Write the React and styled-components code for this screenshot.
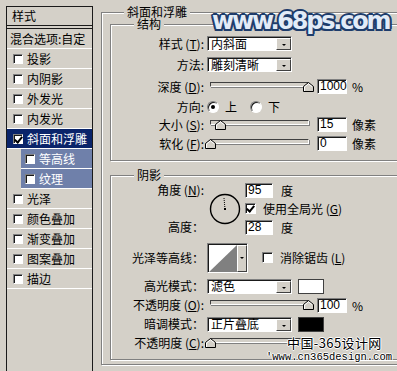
import React from "react";
import styled, { createGlobalStyle } from "styled-components";

const GlobalStyle = createGlobalStyle`
  html, body {
    margin: 0;
    padding: 0;
    background: #d4d0c8;
  }
  body {
    font-family: "Noto Sans CJK SC", "Liberation Sans", sans-serif;
    font-size: 12px;
    color: #000;
  }
  #root {
    width: 397px;
    height: 371px;
    overflow: hidden;
  }
`;

const effects = [
  { name: "投影" },
  { name: "内阴影" },
  { name: "外发光" },
  { name: "内发光" },
  { name: "斜面和浮雕", checked: true, active: true },
  { name: "等高线", sub: true },
  { name: "纹理", sub: true },
  { name: "光泽" },
  { name: "颜色叠加" },
  { name: "渐变叠加" },
  { name: "图案叠加" },
  { name: "描边" },
];

function App() {
  return (
    <>
      <GlobalStyle />
      <Page>
        <StyleList>
          <ListHeader>样式</ListHeader>
          <ListBody>
            <BlendRow>混合选项:自定</BlendRow>
            {effects.map((e) => (
              <EffectRow key={e.name} $active={e.active} $sub={e.sub}>
                <Check $checked={e.checked} />
                <EffectName>{e.name}</EffectName>
              </EffectRow>
            ))}
          </ListBody>
        </StyleList>

        <Options>
          <Group $pt={11} $pb={4} $pl={8}>
            <GroupTitle $left={22}>斜面和浮雕</GroupTitle>

            <Group $pt={8} $pb={7}>
              <GroupTitle $left={23}>结构</GroupTitle>
              <Row $h={21}>
                <Label>样式 (<u>T</u>):</Label>
                <Select value="内斜面" />
              </Row>
              <Row $h={21}>
                <Label>方法:</Label>
                <Select value="雕刻清晰" />
              </Row>
              <Row $h={23}>
                <Label>深度 (<u>D</u>):</Label>
                <Slider value={1} />
                <NumBox>1000</NumBox>
                <Unit>%</Unit>
              </Row>
              <Row $h={17}>
                <Label>方向:</Label>
                <Radio $on />
                <RadioText>上</RadioText>
                <Radio />
                <RadioText>下</RadioText>
              </Row>
              <Row $h={19}>
                <Label>大小 (<u>S</u>):</Label>
                <Slider value={0.11} />
                <NumBox>15</NumBox>
                <Unit>像素</Unit>
              </Row>
              <Row $h={19}>
                <Label>软化 (<u>F</u>):</Label>
                <Slider value={0} />
                <NumBox>0</NumBox>
                <Unit>像素</Unit>
              </Row>
            </Group>

            <Group $pt={5} $pb={6} $mt={14}>
              <GroupTitle $left={23}>阴影</GroupTitle>
              <AngleGrid>
                <Label>角度 (<u>N</u>):</Label>
                <Dial>
                  <svg width="32" height="32" viewBox="0 0 32 32">
                    <circle cx="16" cy="16" r="14.5" fill="none" stroke="#000" strokeWidth="1.4" />
                    <line x1="16" y1="16" x2="15" y2="5" stroke="#000" strokeWidth="1" strokeDasharray="1 1" />
                    <rect x="15" y="15" width="2" height="2" fill="#000" />
                  </svg>
                </Dial>
                <Inline>
                  <NumBox $w={28} $ml={0}>95</NumBox>
                  <Unit $ml={8}>度</Unit>
                </Inline>
                <Inline $row={2}>
                  <Check $checked $size={11} />
                  <CheckText>使用全局光 (<u>G</u>)</CheckText>
                </Inline>
                <Label $row={3}>高度：</Label>
                <Inline $row={3}>
                  <NumBox $w={28} $ml={0}>28</NumBox>
                  <Unit $ml={8}>度</Unit>
                </Inline>
              </AngleGrid>

              <Row $h={33} $mt={5}>
                <Label>光泽等高线：</Label>
                <ContourPicker>
                  <svg width="28" height="27" viewBox="0 0 28 27">
                    <rect width="28" height="27" fill="#fff" />
                    <polygon points="0,27 28,0 28,27" fill="#808080" />
                  </svg>
                  <ContourArrow>
                    <Caret />
                  </ContourArrow>
                </ContourPicker>
                <Check $size={11} $ml={14} />
                <CheckText>消除锯齿 (<u>L</u>)</CheckText>
              </Row>
              <Row $h={18} $mt={3}>
                <Label>高光模式：</Label>
                <Select value="滤色" />
                <Swatch $color="#fff" />
              </Row>
              <Row $h={20}>
                <Label>不透明度 (<u>O</u>):</Label>
                <Slider value={1} />
                <NumBox>100</NumBox>
                <Unit>%</Unit>
              </Row>
              <Row $h={18}>
                <Label>暗调模式：</Label>
                <Select value="正片叠底" />
                <Swatch $color="#000" />
              </Row>
              <Row $h={20}>
                <Label>不透明度 (<u>C</u>):</Label>
                <Slider value={0} />
              </Row>
            </Group>
          </Group>
        </Options>

        <SiteMark>www.68ps.com</SiteMark>
        <CnMark>中国-365设计网</CnMark>
        <UrlMark>'www.cn365design.com</UrlMark>
      </Page>
    </>
  );
}

function Select({ value }) {
  return (
    <SelectBox>
      <SelectText>{value}</SelectText>
      <DropButton>
        <Caret />
      </DropButton>
    </SelectBox>
  );
}

function Slider({ value }) {
  return (
    <SliderWrap>
      <Track />
      <Thumb style={{ left: 5 + value * 98 - 5.5 }}>
        <svg width="11" height="10" viewBox="0 0 11 10">
          <polygon points="0.5,4.5 5.5,0.5 10.5,4.5 10.5,9.5 0.5,9.5" fill="#d4d0c8" stroke="#000" />
          <polyline points="1.5,9 1.5,5 5.5,1.8 9,4.6" fill="none" stroke="#fff" />
        </svg>
      </Thumb>
    </SliderWrap>
  );
}

export default App;

const Page = styled.div`
  position: relative;
  display: flex;
  align-items: flex-start;
  padding: 6px 0 0 6px;
  height: 371px;
  box-sizing: border-box;
`;

const StyleList = styled.div`
  flex: none;
  width: 87px;
  height: 380px;
  box-sizing: border-box;
  border: 1px solid #1a1a1a;
  display: flex;
  flex-direction: column;
`;

const ListHeader = styled.div`
  height: 18px;
  line-height: 18px;
  padding-left: 5px;
  border-bottom: 1px solid #1a1a1a;
`;

const ListBody = styled.div`
  margin-top: 2px;
  border-top: 1px solid #1a1a1a;
  display: flex;
  flex-direction: column;
`;

const BlendRow = styled.div`
  height: 19px;
  line-height: 19px;
  padding-left: 3px;
  border-bottom: 1px solid #fff;
  white-space: nowrap;
`;

const EffectRow = styled.div`
  height: 19px;
  display: flex;
  align-items: center;
  border-bottom: 1px solid #fff;
  margin-left: ${(p) => (p.$sub ? 14 : 0)}px;
  padding-left: ${(p) => (p.$sub ? 4 : 6)}px;
  background: ${(p) => (p.$active ? "#0a246a" : p.$sub ? "#6f80aa" : "transparent")};
  color: ${(p) => (p.$active || p.$sub ? "#fff" : "#000")};
`;

const EffectName = styled.span`
  margin-left: 4px;
  line-height: 14px;
  white-space: nowrap;
`;

const Check = styled.span`
  flex: none;
  position: relative;
  width: ${(p) => p.$size || 10}px;
  height: ${(p) => p.$size || 10}px;
  margin-left: ${(p) => p.$ml || 0}px;
  box-sizing: border-box;
  background: #fff;
  border: 1px solid;
  border-color: #808080 #fff #fff #808080;
  box-shadow: inset 1px 1px 0 #1a1a1a;

  &::after {
    content: "";
    display: ${(p) => (p.$checked ? "block" : "none")};
    position: absolute;
    left: 2px;
    top: 0px;
    width: 3px;
    height: 6px;
    border: solid #000;
    border-width: 0 2px 2px 0;
    transform: rotate(40deg);
  }
`;

const CheckText = styled.span`
  margin-left: 7px;
  white-space: nowrap;
`;

const Options = styled.div`
  flex: none;
  width: 320px;
  margin: 6px 0 0 8px;
`;

const Group = styled.div`
  position: relative;
  margin-top: ${(p) => p.$mt || 0}px;
  padding: ${(p) => p.$pt || 0}px 0 ${(p) => p.$pb || 0}px ${(p) => p.$pl || 0}px;
  border: 1px solid #808080;
  box-shadow: inset 1px 1px 0 #fff, 1px 1px 0 #fff;
`;

const GroupTitle = styled.span`
  position: absolute;
  top: -7px;
  left: ${(p) => p.$left}px;
  padding: 0 3px;
  line-height: 12px;
  background: #d4d0c8;
  white-space: nowrap;
`;

const Row = styled.div`
  display: flex;
  align-items: center;
  height: ${(p) => p.$h}px;
  margin-top: ${(p) => p.$mt || 0}px;
`;

const Label = styled.span`
  flex: none;
  width: 93px;
  margin-right: 1px;
  text-align: right;
  white-space: nowrap;
  line-height: 14px;
  grid-column: 1;
  grid-row: ${(p) => p.$row || 1};

  u {
    text-decoration-thickness: 1px;
    text-underline-offset: 1px;
  }
`;

const SelectBox = styled.div`
  flex: none;
  display: flex;
  align-items: center;
  width: 85px;
  height: 15px;
  margin-left: 2px;
  box-sizing: border-box;
  background: #fff;
  border: 1px solid;
  border-color: #808080 #fff #fff #808080;
  box-shadow: inset 1px 1px 0 #1a1a1a;
`;

const SelectText = styled.span`
  flex: 1;
  padding-left: 3px;
  line-height: 14px;
  white-space: nowrap;
`;

const DropButton = styled.span`
  flex: none;
  width: 15px;
  height: 12px;
  margin: 1px 0 0 0;
  box-sizing: border-box;
  background: #d4d0c8;
  border: 1px solid;
  border-color: #fff #404040 #404040 #fff;
  display: flex;
  align-items: flex-end;
  justify-content: center;
  padding-bottom: 3px;
`;

const Caret = styled.span`
  width: 0;
  height: 0;
  border-left: 2px solid transparent;
  border-right: 2px solid transparent;
  border-top: 2px solid #000;
`;

const SliderWrap = styled.div`
  flex: none;
  position: relative;
  width: 110px;
  height: 12px;
`;

const Track = styled.div`
  margin: 1px 6px 0 5px;
  height: 5px;
  box-sizing: border-box;
  background: #d4d0c8;
  border: 1px solid;
  border-color: #404040 #fff #fff #404040;
  box-shadow: 1px 1px 0 #808080;
`;

const Thumb = styled.div`
  position: absolute;
  top: 1px;
  width: 11px;
  height: 10px;
  line-height: 0;
`;

const NumBox = styled.div`
  flex: none;
  width: ${(p) => p.$w || 30}px;
  height: 15px;
  margin-left: ${(p) => (p.$ml === undefined ? 2 : p.$ml)}px;
  box-sizing: border-box;
  padding-left: 2px;
  line-height: 13px;
  font-family: "Liberation Sans", sans-serif;
  font-size: 12px;
  background: #fff;
  border: 1px solid;
  border-color: #808080 #fff #fff #808080;
  box-shadow: inset 1px 1px 0 #1a1a1a;
`;

const Unit = styled.span`
  margin-left: ${(p) => p.$ml || 5}px;
  white-space: nowrap;
`;

const Radio = styled.span`
  flex: none;
  position: relative;
  width: 12px;
  height: 12px;
  margin-left: 2px;
  box-sizing: border-box;
  border-radius: 50%;
  background: #fff;
  border: 1px solid;
  border-color: #808080 #fff #fff #808080;
  box-shadow: inset 1px 1px 0 #1a1a1a;

  &::after {
    content: "";
    display: ${(p) => (p.$on ? "block" : "none")};
    position: absolute;
    left: 3px;
    top: 3px;
    width: 4px;
    height: 4px;
    border-radius: 50%;
    background: #000;
  }
`;

const RadioText = styled.span`
  margin: 0 11px 0 6px;
`;

const AngleGrid = styled.div`
  display: grid;
  grid-template-columns: 94px 40px auto;
  grid-template-rows: 18px 19px 18px;
  align-items: center;
`;

const Dial = styled.div`
  grid-column: 2;
  grid-row: 1 / 4;
  margin-left: 4px;
  line-height: 0;
`;

const Inline = styled.div`
  grid-column: 3;
  grid-row: ${(p) => p.$row || 1};
  display: flex;
  align-items: center;
`;

const ContourPicker = styled.div`
  flex: none;
  display: flex;
  margin-left: 2px;
  border: 1px solid;
  border-color: #808080 #fff #fff #808080;
  box-shadow: inset 1px 1px 0 #1a1a1a;
  padding: 1px 0 0 1px;
  line-height: 0;
`;

const ContourArrow = styled.span`
  width: 10px;
  height: 27px;
  box-sizing: border-box;
  background: #d4d0c8;
  border: 1px solid;
  border-color: #fff #404040 #404040 #fff;
  display: flex;
  align-items: center;
  justify-content: center;
`;

const Swatch = styled.span`
  flex: none;
  width: 26px;
  height: 15px;
  margin-left: 6px;
  box-sizing: border-box;
  background: ${(p) => p.$color};
  border: 1px solid #404040;
`;

const SiteMark = styled.div`
  position: absolute;
  left: 212px;
  top: 7px;
  font-family: "DejaVu Sans", sans-serif;
  font-weight: bold;
  font-size: 24px;
  letter-spacing: -2.2px;
  color: #e2ebf7;
  text-shadow: 2px 0 0 #1d3c6b, -2px 0 0 #1d3c6b, 0 2px 0 #1d3c6b, 0 -2px 0 #1d3c6b,
    1.5px 1.5px 0 #1d3c6b, -1.5px 1.5px 0 #1d3c6b, 1.5px -1.5px 0 #1d3c6b, -1.5px -1.5px 0 #1d3c6b;
`;

const CnMark = styled.div`
  position: absolute;
  left: 287px;
  top: 335px;
  font-size: 13px;
  line-height: 16px;
  letter-spacing: 0.4px;
  color: #000;
  text-shadow: 1px 0 0 #fff, -1px 0 0 #fff, 0 1px 0 #fff, 0 -1px 0 #fff;
`;

const UrlMark = styled.div`
  position: absolute;
  left: 266px;
  top: 351px;
  font-family: "Liberation Mono", monospace;
  font-size: 10.5px;
  line-height: 12px;
  color: #000;
  text-shadow: 1px 0 0 #fff, -1px 0 0 #fff, 0 1px 0 #fff, 0 -1px 0 #fff;
`;
